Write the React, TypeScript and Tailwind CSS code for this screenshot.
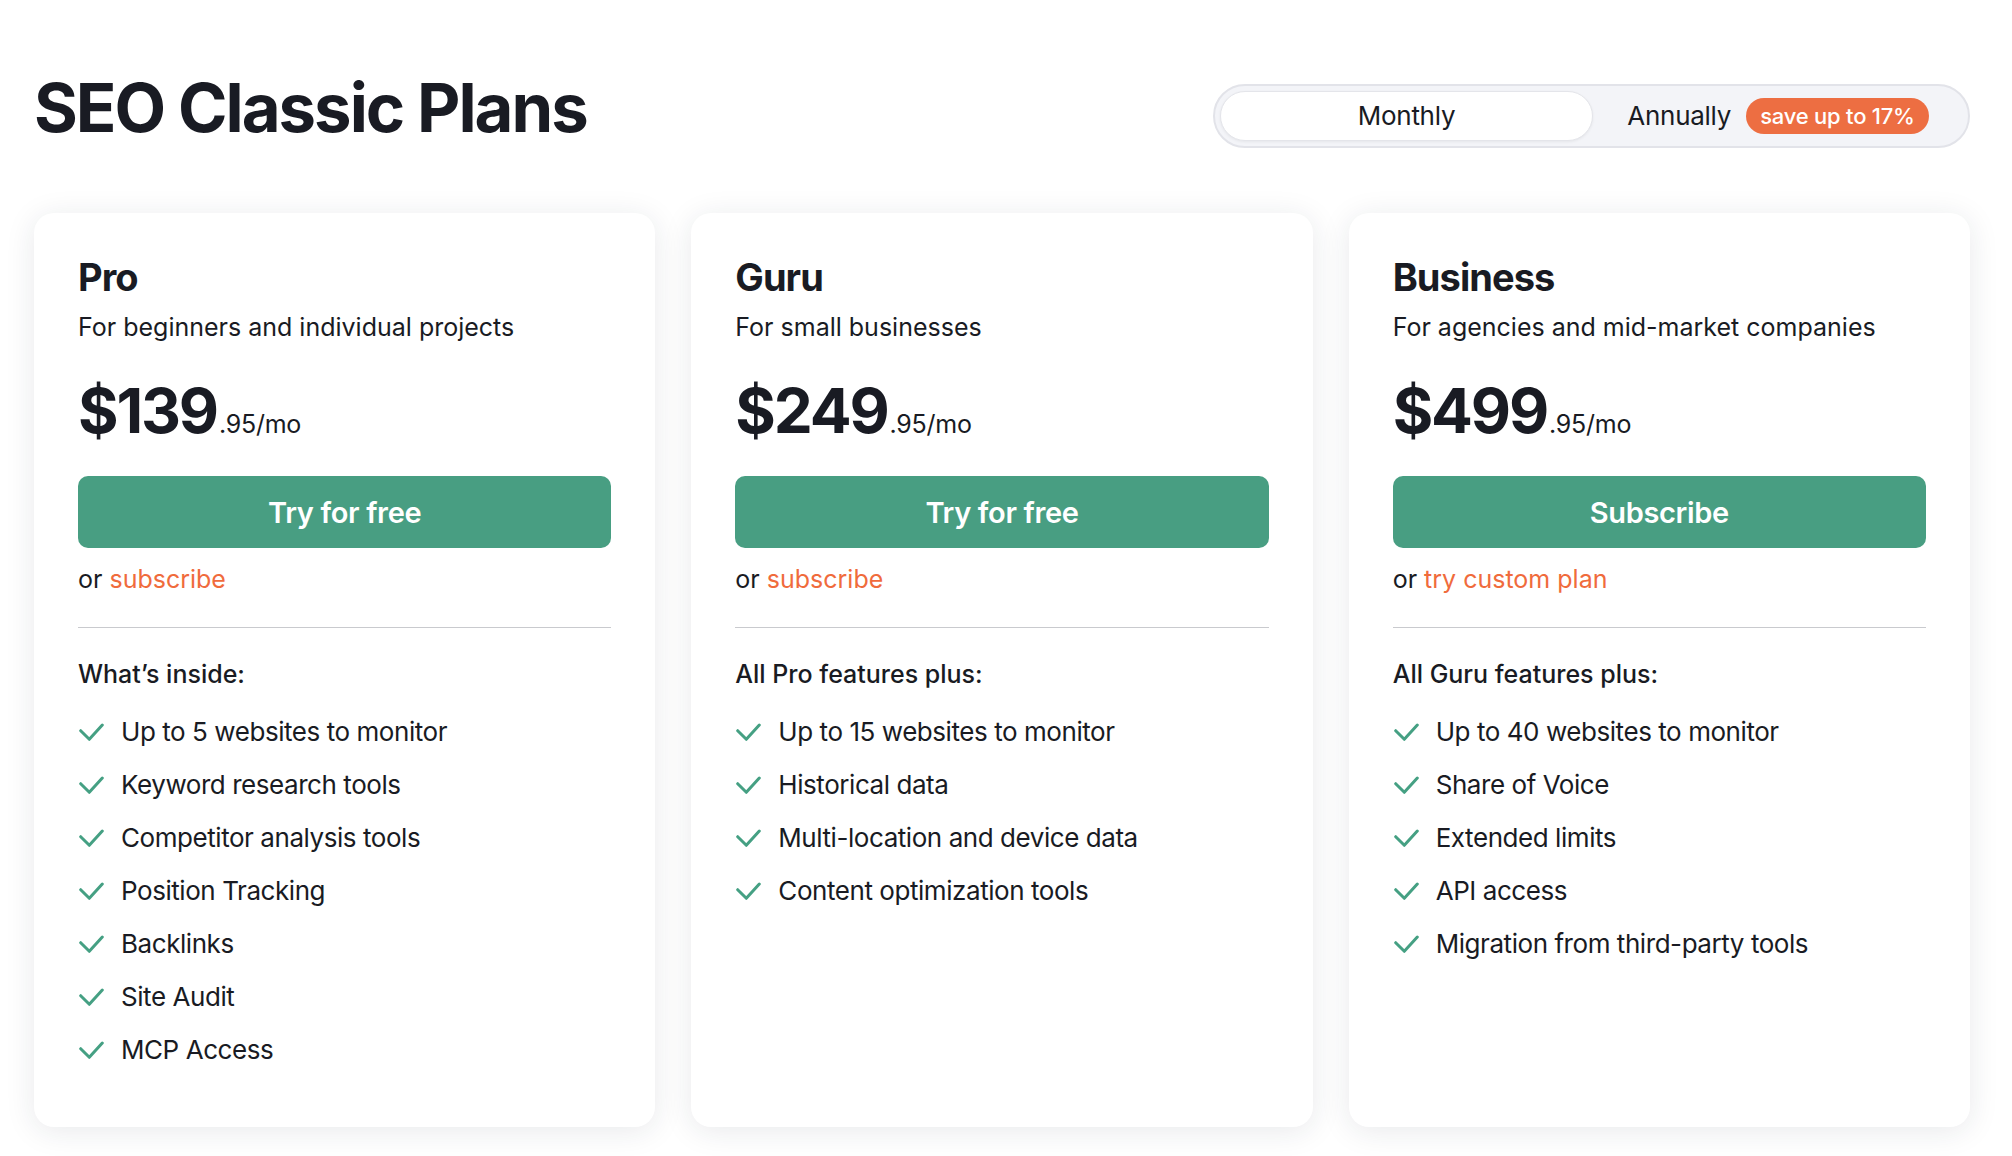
import React from "react";

type Plan = {
  name: string;
  desc: string;
  price: string;
  cta: string;
  altPrefix: string;
  alt: string;
  listTitle: string;
  features: string[];
};

const plans: Plan[] = [
  {
    name: "Pro",
    desc: "For beginners and individual projects",
    price: "$139",
    cta: "Try for free",
    altPrefix: "or",
    alt: "subscribe",
    listTitle: "What’s inside:",
    features: [
      "Up to 5 websites to monitor",
      "Keyword research tools",
      "Competitor analysis tools",
      "Position Tracking",
      "Backlinks",
      "Site Audit",
      "MCP Access",
    ],
  },
  {
    name: "Guru",
    desc: "For small businesses",
    price: "$249",
    cta: "Try for free",
    altPrefix: "or",
    alt: "subscribe",
    listTitle: "All Pro features plus:",
    features: [
      "Up to 15 websites to monitor",
      "Historical data",
      "Multi-location and device data",
      "Content optimization tools",
    ],
  },
  {
    name: "Business",
    desc: "For agencies and mid-market companies",
    price: "$499",
    cta: "Subscribe",
    altPrefix: "or",
    alt: "try custom plan",
    listTitle: "All Guru features plus:",
    features: [
      "Up to 40 websites to monitor",
      "Share of Voice",
      "Extended limits",
      "API access",
      "Migration from third-party tools",
    ],
  },
];

function Check() {
  return (
    <svg width="26" height="20" viewBox="0 0 26 20" fill="none" className="shrink-0">
      <path
        d="M2.7 8.7 L11.3 17.3 L24.3 3"
        stroke="#45a083"
        strokeWidth="3"
        strokeLinecap="round"
        strokeLinejoin="round"
      />
    </svg>
  );
}

function Card({ plan }: { plan: Plan }) {
  return (
    <div className="bg-white rounded-[20px] h-[914px] px-[44px] pt-[45px] shadow-[0_4px_30px_rgba(30,35,55,0.10)] flex flex-col">
      <h2 className="text-[38px] leading-none font-bold text-[#191b23] tracking-[-0.025em]">{plan.name}</h2>
      <p className="mt-[19px] text-[25px] leading-none text-[#191b23]">{plan.desc}</p>
      <div className="mt-[40px] flex items-baseline text-[#191b23]">
        <span className="text-[62px] leading-none font-bold tracking-[-0.035em]">{plan.price}</span>
        <span className="ml-[2px] text-[25px] leading-none tracking-[-0.01em]">.95/mo</span>
      </div>
      <button className="mt-[34px] h-[72px] w-full rounded-[10px] bg-[#489e82] text-white text-[29px] font-semibold leading-none tracking-[-0.012em]">
        {plan.cta}
      </button>
      <p className="mt-[19px] text-[25px] leading-none text-[#191b23]">
        {plan.altPrefix} <span className="text-[#f06b3c]">{plan.alt}</span>
      </p>
      <div className="mt-[35px] h-px bg-[#c9cace]" />
      <p className="mt-[34px] text-[25px] leading-none font-medium text-[#191b23]">{plan.listTitle}</p>
      <ul className="mt-[32px] flex flex-col gap-[27px]">
        {plan.features.map((f) => (
          <li key={f} className="flex items-center h-[26px]">
            <Check />
            <span className="ml-[17px] text-[26px] leading-none text-[#191b23] tracking-[-0.017em]">{f}</span>
          </li>
        ))}
      </ul>
    </div>
  );
}

export default function App() {
  return (
    <div className="w-[2012px] h-[1156px] bg-white overflow-hidden" style={{ fontFamily: "Inter, 'Noto Sans', sans-serif" }}>
      <div className="pl-[34px] pr-[42px]">
        <div className="flex justify-between items-start pt-[74px]">
          <h1 className="text-[67px] leading-none font-bold text-[#191b23] tracking-[-0.03em]">SEO Classic Plans</h1>
          <div className="mt-[10px] w-[757px] h-[64px] rounded-full border-2 border-[#e2e3e9] bg-[#f3f4f8] p-[5px] flex">
            <div className="w-[373px] h-full rounded-full bg-white border border-[#e4e5ea] shadow-[0_1px_3px_rgba(0,0,0,0.06)] flex items-center justify-center">
              <span className="text-[26px] leading-none text-[#191b23] tracking-[-0.01em]">Monthly</span>
            </div>
            <div className="flex-1 flex items-center justify-center gap-[15px]">
              <span className="text-[26px] leading-none text-[#191b23] tracking-[-0.01em]">Annually</span>
              <span className="h-[36px] px-[14px] rounded-full bg-[#ed6e42] text-white text-[22px] leading-none font-medium tracking-[-0.01em] flex items-center">
                save up to 17%
              </span>
            </div>
          </div>
        </div>
        <div className="mt-[65px] grid grid-cols-3 gap-[36px]">
          {plans.map((p) => (
            <Card key={p.name} plan={p} />
          ))}
        </div>
      </div>
    </div>
  );
}
